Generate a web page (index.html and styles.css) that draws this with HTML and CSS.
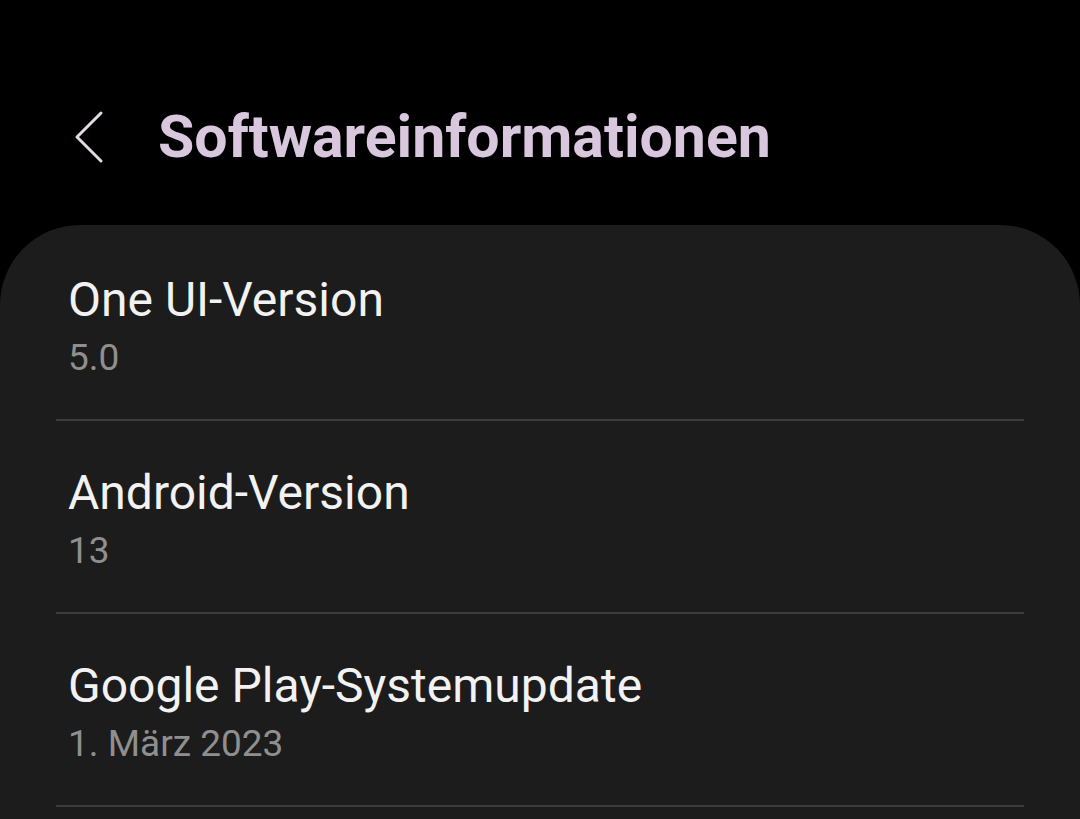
FILE: index.html
```html
<!DOCTYPE html>
<html lang="de">
<head>
    <meta charset="UTF-8">
    <title>Softwareinformationen</title>
    <link rel="stylesheet" href="styles.css">
</head>
<body>
    <div class="header">
        <svg class="back" width="30" height="54" viewBox="0 0 30 54">
            <path d="M27 3 L3 27 L27 51" fill="none" stroke="#e4dae6" stroke-width="3" stroke-linecap="round" stroke-linejoin="round"/>
        </svg>
        <h1>Softwareinformationen</h1>
    </div>

    <div class="card">
        <div class="row">
            <div class="row-title">One UI-Version</div>
            <div class="row-value">5.0</div>
        </div>
        <div class="row">
            <div class="row-title">Android-Version</div>
            <div class="row-value">13</div>
        </div>
        <div class="row">
            <div class="row-title">Google Play-Systemupdate</div>
            <div class="row-value">1. März 2023</div>
        </div>
    </div>
</body>
</html>
```

FILE: styles.css
```css
body {
    margin: 0;
    background-color: #000;
    font-family: Roboto, "Noto Sans", sans-serif;
    height: 819px;
    overflow: hidden;
}
.header {
    height: 225px;
    box-sizing: border-box;
    padding: 48px 0 0 74px;
    display: flex;
    align-items: center;
}
.back {
    flex-shrink: 0;
}
h1 {
    margin: 0 0 0 54px;
    font-size: 59px;
    font-weight: 700;
    color: #d8c7dd;
}
.card {
    background-color: #1c1c1c;
    border-radius: 80px 80px 0 0;
    padding: 0 56px;
    height: 594px;
}
.row {
    padding: 44px 0 39px 12px;
    border-bottom: 2px solid #3c3c3c;
}
.row:first-child {
    padding-top: 47px;
}
.row-title {
    font-size: 48px;
    line-height: 56px;
    color: #f2f2f2;
}
.row-value {
    margin-top: 8px;
    font-size: 37px;
    line-height: 44px;
    color: #8f8f8f;
}
```
